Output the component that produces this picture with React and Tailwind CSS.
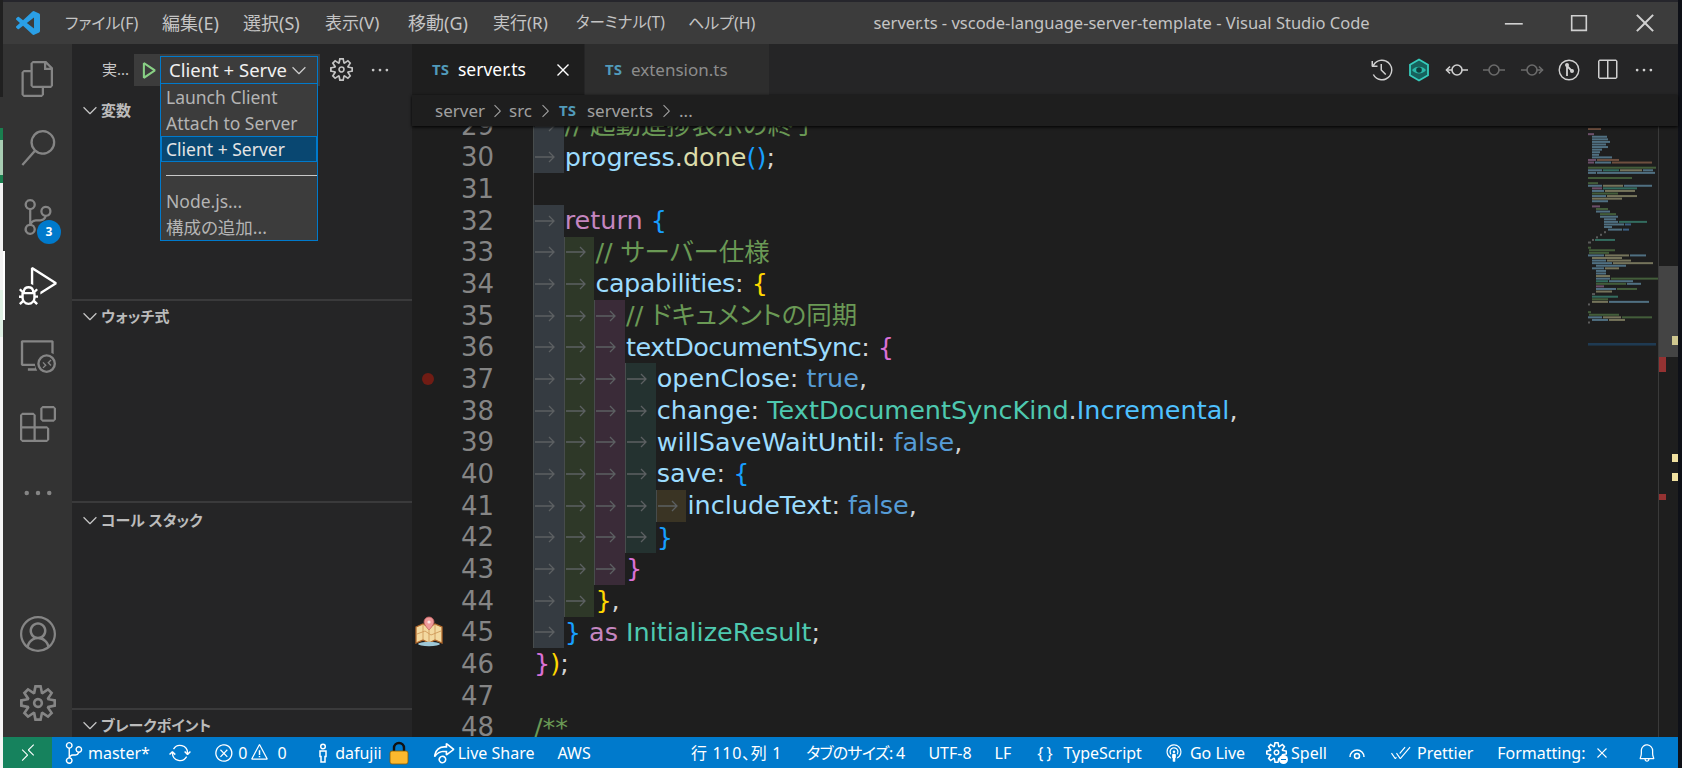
import React from 'react';
import {
  VscFiles, VscSearch, VscSourceControl, VscDebugAlt, VscRemoteExplorer, VscExtensions, VscEllipsis,
  VscAccount, VscSettingsGear, VscDebugStart, VscChevronDown, VscChevronRight, VscClose, VscHistory,
  VscSplitHorizontal, VscRemote, VscSync, VscError, VscWarning, VscLiveShare, VscBroadcast, VscCheckAll,
  VscBell, VscChromeMinimize, VscChromeMaximize, VscChromeClose,
} from 'react-icons/vsc';

const INDENT = ['bg-[#353b41]', 'bg-[#2e3828]', 'bg-[#3a2b38]', 'bg-[#243230]', 'bg-[#3a3424]'];

const VAR = 'text-[#9cdcfe]';
const KW = 'text-[#569cd6]';
const CTRL = 'text-[#c586c0]';
const TYPE = 'text-[#4ec9b0]';
const CMT = 'text-[#6a9955]';
const PUN = 'text-[#d4d4d4]';
const FN = 'text-[#dcdcaa]';
const BLUE = 'text-[#179fff]';
const GOLD = 'text-[#ffd700]';
const PINK = 'text-[#da70d6]';
const ENUM = 'text-[#4fc1ff]';

const lines = [
  { n: 29, d: 1, t: [['// 起動進捗表示の終了', CMT]] },
  { n: 30, d: 1, t: [['progress', VAR], ['.', PUN], ['done', FN], ['()', BLUE], [';', PUN]] },
  { n: 31, d: 0, guide: true, t: [] },
  { n: 32, d: 1, t: [['return ', CTRL], ['{', BLUE]] },
  { n: 33, d: 2, t: [['// サーバー仕様', CMT]] },
  { n: 34, d: 2, t: [['capabilities', 'text-[#9cdcfe] tracking-[-0.45px]'], [': ', PUN], ['{', GOLD]] },
  { n: 35, d: 3, t: [['// ドキュメントの同期', CMT]] },
  { n: 36, d: 3, t: [['textDocumentSync', 'text-[#9cdcfe] tracking-[-0.55px]'], [': ', PUN], ['{', PINK]] },
  { n: 37, d: 4, t: [['openClose', VAR], [': ', PUN], ['true', KW], [',', PUN]] },
  { n: 38, d: 4, t: [['change', VAR], [': ', PUN], ['TextDocumentSyncKind', TYPE], ['.', PUN], ['Incremental', ENUM], [',', PUN]] },
  { n: 39, d: 4, t: [['willSaveWaitUntil', VAR], [': ', PUN], ['false', KW], [',', PUN]] },
  { n: 40, d: 4, t: [['save', VAR], [': ', PUN], ['{', BLUE]] },
  { n: 41, d: 5, t: [['includeText', VAR], [': ', PUN], ['false', KW], [',', PUN]] },
  { n: 42, d: 4, t: [['}', BLUE]] },
  { n: 43, d: 3, t: [['}', PINK]] },
  { n: 44, d: 2, t: [['}', GOLD], [',', PUN]] },
  { n: 45, d: 1, t: [['}', BLUE], [' as ', CTRL], ['InitializeResult', TYPE], [';', PUN]] },
  { n: 46, d: 0, t: [['}', PINK], [')', GOLD], [';', PUN]] },
  { n: 47, d: 0, t: [] },
  { n: 48, d: 0, t: [['/**', CMT]] },
];

const C = { b: '#6c9db8', g: '#587f4a', p: '#966a92', y: '#a5a37c', t: '#3f9682', w: '#7d7d7d', o: '#9a6a52', k: '#4d82b8' };

// minimap rows: [indent, [width, colour], ...]
const mini = [
  [0, [13, 'o']], [],
  [0, [6, 'p']], [4, [15, 'b']], [4, [16, 'b']], [4, [18, 'b']], [4, [14, 'b']], [4, [16, 'b']], [4, [10, 'b']],
  [4, [8, 'b']], [4, [7, 'b']], [4, [20, 'b']], [0, [8, 'p'], [22, 'o']], [0, [6, 'p'], [16, 'b'], [40, 'o']], [],
  [0, [68, 'g']], [0, [14, 'b'], [16, 't'], [22, 'y'], [10, 'b']], [0, [8, 'b'], [58, 'b']], [],
  [0, [44, 'g']], [],
  [0, [10, 'g']], [0, [14, 'b'], [20, 'y'], [28, 'b']], [4, [10, 'p'], [34, 't']], [4, [12, 'b'], [30, 'y']],
  [4, [26, 'g']], [4, [14, 'b'], [30, 'y']], [4, [30, 'y']], [4, [16, 'b']], [],
  [4, [8, 'p']], [8, [12, 'g']], [8, [14, 'b']], [12, [16, 'g']], [12, [18, 'b']], [16, [12, 'b']],
  [16, [14, 'b'], [28, 't']], [16, [20, 'b'], [6, 'k']], [16, [8, 'b']], [20, [14, 'b'], [6, 'k']], [16, [2, 'w']],
  [12, [2, 'w']], [8, [2, 'w']], [4, [2, 'w'], [20, 't']], [0, [3, 'w']], [],
  [0, [3, 'g']], [1, [26, 'g']], [1, [20, 'g']], [0, [16, 'b'], [24, 'y'], [16, 'b']], [4, [30, 'y']], [4, [14, 'b'], [24, 'y']],
  [4, [20, 'b'], [40, 'y']], [8, [30, 'b']], [4, [12, 'b'], [14, 'y']], [8, [10, 'b']], [8, [10, 'b']], [8, [14, 'y']],
  [8, [14, 'b'], [50, 'g']], [8, [12, 't'], [24, 'b']], [8, [30, 'g'], [14, 'b']], [8, [8, 'p']], [8, [20, 'b'], [20, 'g']],
  [8, [16, 'y']], [4, [3, 'w']], [4, [26, 't']], [4, [16, 'g']], [4, [16, 'y'], [40, 'b']], [0, [2, 'w']], [], [],
  [0, [3, 'g']], [1, [30, 'g']], [0, [14, 'b'], [18, 'y'], [30, 'g']], [4, [16, 'b'], [16, 'y']], [0, [2, 'w']],
];

function Guide({ depth }) {
  return (
    <div className={`w-[30.7px] shrink-0 h-full border-l border-[#474c4c] flex items-center pl-[1px] ${INDENT[depth]}`}>
      <svg width="21" height="12" viewBox="0 0 21 12" fill="none" stroke="#5c6062" strokeWidth="1.3">
        <path d="M0 6h19M14 1l5 5-5 5" />
      </svg>
    </div>
  );
}

function CodeLine({ line }) {
  return (
    <div className="flex h-[31.67px] items-center relative">
      <div className="w-[82px] shrink-0 text-right text-[#858585] text-[26px] leading-none">{line.n}</div>
      {line.n === 37 && <div className="absolute left-[10px] top-[10px] w-[12px] h-[12px] rounded-full bg-[#701c14]" />}
      {line.n === 45 && (
        <svg className="absolute left-[3px] top-[-1px]" width="28" height="31" viewBox="0 0 28 31">
          <path d="M1 11l7-3 6 3 6-3 7 3v16l-7-3-6 3-6-3-7 3z" fill="#f3d9a0" stroke="#b0682c" strokeWidth="1.3" />
          <path d="M8 8v16M14 11v17M20 8v16M2 18l8-3 6 4 10-4" fill="none" stroke="#cf9a5a" strokeWidth="0.9" />
          <ellipse cx="14" cy="28" rx="11" ry="2.2" fill="#9ec8d8" />
          <path d="M14 1a5 5 0 0 1 5 5c0 3-5 8-5 8s-5-5-5-8a5 5 0 0 1 5-5z" fill="#ef9a9a" stroke="#c0605f" strokeWidth="0.8" />
          <circle cx="14" cy="6" r="1.6" fill="#fbe3e3" />
        </svg>
      )}
      <div className="ml-[39px] flex h-full items-center">
        {line.guide && <div className="w-[30.7px] h-full border-l border-[#404040]" />}
        {Array.from({ length: line.d }).map((_, i) => <Guide key={i} depth={i} />)}
        <div className="whitespace-pre text-[25.5px] leading-none pl-[1px]">
          {line.t.map(([s, c], i) => <span key={i} className={c}>{s}</span>)}
        </div>
      </div>
    </div>
  );
}

function Minimap() {
  return (
    <svg className="w-full h-[230px] block" viewBox="0 0 70 230">
      {mini.map((row, i) => {
        let x = row[0];
        return row.slice(1).map(([w, c], j) => {
          const r = <rect key={`${i}-${j}`} x={x} y={2 + i * 2.58} width={w} height="2" fill={C[c]} opacity="0.65" />;
          x += w + 1;
          return r;
        });
      })}
      <rect x="0" y="217" width="68" height="2.6" fill="#1f3a52" />
    </svg>
  );
}

function Section({ title, className, textClass }) {
  return (
    <div className={`border-t-2 border-[#3a3a3b] ${className}`}>
      <div className={`h-[30px] flex items-center pl-[7px] text-[15px] font-bold text-[#bbbbbb] ${textClass || ''}`}>
        <VscChevronDown size={22} className="text-[#c5c5c5]" />
        <span>{title}</span>
      </div>
    </div>
  );
}

function ActivityIcon({ children, active }) {
  return (
    <div className={`h-[69px] flex items-center justify-center relative ${active ? 'text-white' : 'text-[#858585]'}`}>
      {active && <div className="absolute left-0 top-0 bottom-0 w-[2px] bg-white" />}
      {children}
    </div>
  );
}

function GitlensDot({ dir, dim }) {
  const col = dim ? '#6b6b6b' : '#d0d0d0';
  return (
    <svg width="24" height="16" viewBox="0 0 24 16" fill="none" stroke={col} strokeWidth="1.6">
      <circle cx="12" cy="8" r="5" />
      <path d="M1 8h6M17 8h6" />
      {dir === 'l' && <path d="M5 4.5L1.5 8 5 11.5" />}
      {dir === 'r' && <path d="M19 4.5L22.5 8 19 11.5" />}
    </svg>
  );
}

function Action({ children }) {
  return <div className="w-[37.5px] flex justify-center items-center">{children}</div>;
}

function TsIcon({ className }) {
  return <span className={`text-[15px] font-bold text-[#519aba] leading-none ${className}`}>TS</span>;
}

export default function App() {
  return (
    <div className="w-[1682px] h-[768px] overflow-hidden flex bg-[#0e1017] font-['Noto_Sans','Noto_Sans_CJK_JP',sans-serif] [font-feature-settings:'palt']">
      {/* what's behind the window on the left */}
      <div className="w-[3px] shrink-0 flex flex-col">
        <div className="h-[97px] bg-[#202020]" />
        <div className="h-[31px] bg-[#333333]" />
        <div className="h-[12px] bg-[#1a7f4f]" />
        <div className="h-[35px] bg-[#a8cdb3]" />
        <div className="h-[8px] bg-[#1a7f4f]" />
        <div className="h-[107px] bg-[#f2f2f2]" />
        <div className="h-[47px] bg-[#dff0e4]" />
        <div className="flex-1 bg-[#f5f5f5]" />
      </div>

      <div className="w-[1675px] shrink-0 flex flex-col pt-[2px] bg-[#26262c]">
        {/* title bar */}
        <div className="h-[42px] shrink-0 bg-[#3c3c3c] flex items-center text-[#c4c4c4] relative">
          <svg className="ml-[13px] mt-[-1px]" width="24" height="24" viewBox="0 0 24 24">
            <path fill="#2a9fe6" d="M23.15 2.587L18.21.21a1.494 1.494 0 0 0-1.705.29l-9.46 8.63-4.12-3.128a.999.999 0 0 0-1.276.057L.327 7.261A1 1 0 0 0 .326 8.74L3.899 12 .326 15.26a1 1 0 0 0 .001 1.479L1.65 17.94a.999.999 0 0 0 1.276.057l4.12-3.128 9.46 8.63a1.492 1.492 0 0 0 1.704.29l4.942-2.377A1.5 1.5 0 0 0 24 20.06V3.939a1.5 1.5 0 0 0-.85-1.352zm-5.146 14.861L10.826 12l7.178-5.448v10.896z" />
          </svg>
          <div className="flex items-center ml-[25px]">
            <span className="w-[97px] text-[16px]">ファイル(F)</span>
            <span className="w-[81px] text-[18px]">編集(E)</span>
            <span className="w-[82px] text-[18px]">選択(S)</span>
            <span className="w-[83px] text-[17px]">表示(V)</span>
            <span className="w-[85px] text-[18px]">移動(G)</span>
            <span className="w-[83px] text-[17px]">実行(R)</span>
            <span className="w-[112px] text-[15.5px]">ターミナル(T)</span>
            <span className="text-[16px]">ヘルプ(H)</span>
          </div>
          <div className="ml-[118px] text-[16.5px]">server.ts - vscode-language-server-template - Visual Studio Code</div>
          <div className="ml-auto flex text-[#d0d0d0]">
            <div className="w-[66px] flex justify-center"><VscChromeMinimize size={26} /></div>
            <div className="w-[66px] flex justify-center"><VscChromeMaximize size={26} /></div>
            <div className="w-[66px] flex justify-center"><VscChromeClose size={26} /></div>
          </div>
        </div>

        <div className="flex-1 flex min-h-0">
          {/* activity bar */}
          <div className="w-[69px] shrink-0 bg-[#333333] flex flex-col">
            <ActivityIcon><VscFiles size={36} /></ActivityIcon>
            <ActivityIcon><VscSearch size={36} /></ActivityIcon>
            <ActivityIcon>
              <VscSourceControl size={36} />
              <span className="absolute left-[34px] top-[38px] w-[24px] h-[24px] rounded-full bg-[#007acc] text-white text-[12px] font-bold flex items-center justify-center">3</span>
            </ActivityIcon>
            <ActivityIcon active><VscDebugAlt size={38} /></ActivityIcon>
            <ActivityIcon><VscRemoteExplorer size={36} /></ActivityIcon>
            <ActivityIcon><VscExtensions size={36} /></ActivityIcon>
            <ActivityIcon><VscEllipsis size={36} /></ActivityIcon>
            <div className="mt-auto">
              <ActivityIcon><VscAccount size={36} /></ActivityIcon>
              <ActivityIcon><VscSettingsGear size={36} /></ActivityIcon>
            </div>
          </div>

          {/* debug side bar */}
          <div className="w-[340px] shrink-0 bg-[#252526] flex flex-col relative">
            <div className="h-[51px] shrink-0 flex items-center relative">
              <span className="ml-[30px] w-[32px] text-[15px] text-[#c8c8c8]">実...</span>
              <div className="h-[32px] w-[186px] bg-[#3c3c3c] flex items-center">
                <VscDebugStart size={22} className="text-[#89d185] ml-[3px]" />
                <div className="ml-[1px] w-[158px] h-[28px] border border-[#007acc] flex items-center text-[18.5px] text-[#f0f0f0] pl-[8px] overflow-hidden whitespace-nowrap">
                  <span className="w-[119px] overflow-hidden">Client + Server</span>
                  <VscChevronDown size={22} className="text-[#cccccc] shrink-0" />
                </div>
              </div>
              <VscSettingsGear size={23} className="ml-[10px] text-[#c5c5c5]" />
              <VscEllipsis size={22} className="ml-[16px] text-[#c5c5c5]" />
              {/* open select list */}
              <div className="absolute left-[88px] top-[39px] w-[158px] h-[158px] bg-[#3c3c3c] border border-[#007acc] text-[17.5px] text-[#b4b4b4] z-10">
                <div className="h-[26px] flex items-center pl-[5px]">Launch Client</div>
                <div className="h-[26px] flex items-center pl-[5px]">Attach to Server</div>
                <div className="h-[26px] flex items-center pl-[4px] bg-[#094771] border border-[#007acc] text-[#e4e4e4]">Client + Server</div>
                <div className="h-[26px] flex items-center pl-[5px]"><div className="w-full h-px bg-[#c8c8c8]" /></div>
                <div className="h-[26px] flex items-center pl-[5px]">Node.js...</div>
                <div className="h-[26px] flex items-center pl-[5px]">構成の追加...</div>
              </div>
            </div>
            <div className="h-[204px] shrink-0 flex flex-col">
              <div className="h-[30px] flex items-center pl-[7px] text-[15px] font-bold text-[#bbbbbb]">
                <VscChevronDown size={22} className="text-[#c5c5c5]" />
                <span>変数</span>
              </div>
            </div>
            <Section title="ウォッチ式" className="h-[202px] shrink-0" />
            <Section title="コール スタック" className="h-[207px] shrink-0" textClass="mt-[2px]" />
            <Section title="ブレークポイント" className="flex-1" />
          </div>

          {/* editor */}
          <div className="flex-1 min-w-0 flex flex-col bg-[#1e1e1e]">
            <div className="h-[51px] shrink-0 bg-[#252526] flex">
              <div className="w-[172px] bg-[#1e1e1e] flex items-center">
                <TsIcon className="ml-[20px]" />
                <span className="ml-[9px] text-[17.5px] text-white">server.ts</span>
                <VscClose size={22} className="ml-[26px] text-white" />
              </div>
              <div className="w-[184px] ml-[1px] bg-[#2d2d2d] flex items-center">
                <TsIcon className="ml-[20px]" />
                <span className="ml-[9px] text-[17px] text-[#8c8c8c]">extension.ts</span>
              </div>
              <div className="ml-auto flex pr-[15px]">
                <Action><VscHistory size={24} className="text-[#d0d0d0]" /></Action>
                <Action>
                  <svg width="22" height="24" viewBox="0 0 22 24">
                    <path d="M11 1.5l9 5.2v10.600l-9 5.200-9-5.200V6.700z" fill="#17615c" stroke="#35cbbb" strokeWidth="1.800" />
                    <path d="M4 12c3-4.500 11-4.500 14 0-3 4.500-11 4.500-14 0z" fill="#2bb8a8" />
                    <circle cx="11" cy="12" r="2.800" fill="#0e3f3c" />
                  </svg>
                </Action>
                <Action><GitlensDot dir="l" /></Action>
                <Action><GitlensDot dim /></Action>
                <Action><GitlensDot dir="r" dim /></Action>
                <Action>
                  <svg width="22" height="22" viewBox="0 0 22 22" fill="none" stroke="#d0d0d0" strokeWidth="1.400">
                    <circle cx="11" cy="11" r="9.800" />
                    <path d="M9 6v11M9 7l5 5" strokeWidth="1.800" />
                    <circle cx="9" cy="6" r="1.300" fill="#d0d0d0" />
                    <circle cx="14" cy="12" r="1.300" fill="#d0d0d0" />
                  </svg>
                </Action>
                <Action><VscSplitHorizontal size={24} className="text-[#d0d0d0]" /></Action>
                <Action><VscEllipsis size={22} className="text-[#d0d0d0]" /></Action>
              </div>
            </div>

            <div className="h-[31px] shrink-0 bg-[#1e1e1e] flex items-center pl-[23px] text-[17px] text-[#a0a0a0] relative z-10 shadow-[0_1px_3px_#000]">
              <span>server</span>
              <VscChevronRight size={20} className="mx-[2px]" />
              <span>src</span>
              <VscChevronRight size={20} className="mx-[3px]" />
              <TsIcon className="ml-[1px]" />
              <span className="ml-[11px]">server.ts</span>
              <VscChevronRight size={20} className="mx-[3px]" />
              <span>...</span>
            </div>

            <div className="flex-1 min-h-0 flex">
              <div className="flex-1 min-w-0 overflow-hidden font-['DejaVu_Sans','Noto_Sans_CJK_JP',sans-serif]">
                <div className="mt-[-16px]">
                  {lines.map((l) => <CodeLine key={l.n} line={l} />)}
                </div>
              </div>
              <div className="w-[70px] shrink-0"><Minimap /></div>
              <div className="w-[20px] shrink-0 border-l border-[#3a3a3a] relative">
                <div className="absolute left-0 right-0 top-[140px] h-[91px] bg-[#444444]" />
                <div className="absolute right-0 top-[210px] w-[6px] h-[9px] bg-[#cfc78f]" />
                <div className="absolute left-0 top-[231px] w-[7px] h-[15px] bg-[#943232]" />
                <div className="absolute right-0 top-[328px] w-[6px] h-[8px] bg-[#f0e0a0]" />
                <div className="absolute right-0 top-[347px] w-[6px] h-[8px] bg-[#f0e0a0]" />
                <div className="absolute left-0 top-[368px] w-[7px] h-[6px] bg-[#943232]" />
              </div>
            </div>
          </div>
        </div>

        {/* status bar */}
        <div className="h-[31px] shrink-0 bg-[#007acc] flex items-center text-white text-[16px] whitespace-nowrap">
          <div className="w-[49px] h-full bg-[#16825d] flex items-center justify-center"><VscRemote size={20} /></div>
          <VscSourceControl size={22} className="ml-[11px]" />
          <span className="ml-[3px]">master*</span>
          <VscSync size={22} className="ml-[19px]" />
          <VscError size={20} className="ml-[23px]" />
          <span className="ml-[4.500px]">0</span>
          <VscWarning size={19} className="ml-[3px]" />
          <span className="ml-[8px]">0</span>
          <svg className="ml-[29.500px]" width="14" height="20" viewBox="0 0 14 20" fill="none" stroke="white" strokeWidth="1.500">
            <circle cx="7" cy="3.500" r="2.300" />
            <path d="M4 8h6v5.500H9V19H5v-5.500H4z" />
          </svg>
          <span className="ml-[5px]">dafujii</span>
          <svg className="ml-[7px]" width="20" height="24" viewBox="0 0 20 24">
            <path d="M5 11V7a5 5 0 0 1 10 0v4" fill="none" stroke="#111" strokeWidth="2.400" />
            <rect x="1" y="10" width="18" height="13" rx="2" fill="#fdb92e" stroke="#8a5a00" strokeWidth="0.800" />
          </svg>
          <VscLiveShare size={22} className="ml-[24px]" />
          <span className="ml-[3px]">Live Share</span>
          <span className="ml-[23px]">AWS</span>

          <div className="ml-auto flex items-center mr-[21.500px]">
            <span className="tracking-[0.700px]">行 110、列 1</span>
            <span className="ml-[24px] tracking-[-0.700px]">タブのサイズ: 4</span>
            <span className="ml-[24px]">UTF-8</span>
            <span className="ml-[23px]">LF</span>
            <span className="ml-[26px] tracking-[3px]">{'{}'}</span>
            <span className="ml-[8px]">TypeScript</span>
            <VscBroadcast size={20} className="ml-[22px]" />
            <span className="ml-[6px]">Go Live</span>
            <div className="ml-[21px] relative">
              <VscSettingsGear size={21} />
              <span className="absolute right-[-1px] bottom-[-1px] w-[9px] h-[9px] rounded-full bg-white" />
              <span className="absolute right-[1px] bottom-[3px] w-[5px] h-px bg-[#007acc]" />
            </div>
            <span className="ml-[4px]">Spell</span>
            <svg className="ml-[21px]" width="18" height="16" viewBox="0 0 18 16" fill="none" stroke="white" strokeWidth="1.500">
              <path d="M2 12a7 7 0 0 1 14 0" />
              <circle cx="9" cy="11" r="2.500" />
            </svg>
            <VscCheckAll size={20} className="ml-[25px]" />
            <span className="ml-[6px]">Prettier</span>
            <span className="ml-[24px]">Formatting:</span>
            <VscClose size={18} className="ml-[7px]" />
            <VscBell size={20} className="ml-[26px]" />
          </div>
        </div>
      </div>
    </div>
  );
}
